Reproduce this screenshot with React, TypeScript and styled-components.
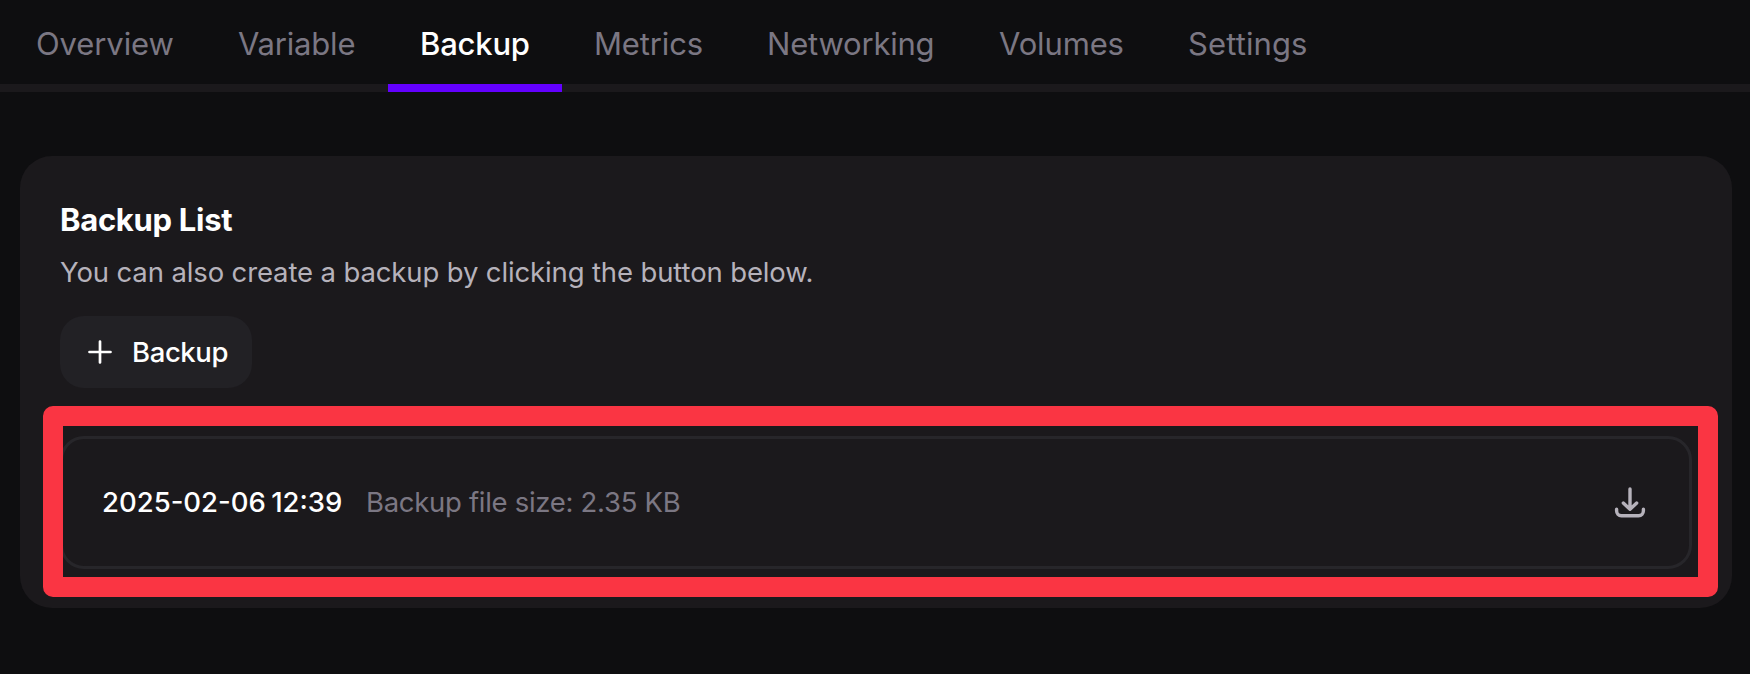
import React from "react";
import styled, { createGlobalStyle } from "styled-components";

const GlobalStyle = createGlobalStyle`
  *, *::before, *::after { box-sizing: border-box; }
  body {
    margin: 0;
    background: #0e0e10;
    font-family: Inter, "Liberation Sans", sans-serif;
    -webkit-font-smoothing: antialiased;
  }
  button { font: inherit; border: 0; padding: 0; background: none; }
`;

const Page = styled.div`
  min-height: 674px;
  overflow: hidden;
`;

const TabBar = styled.nav`
  display: flex;
  height: 92px;
  padding-left: 4px;
  box-shadow: inset 0 -8px 0 #1b191c;
`;

const Tab = styled.button<{ $active?: boolean; $width: number; $tracking: number }>`
  flex: none;
  width: ${(p) => p.$width}px;
  padding: 0 0 0 32px;
  border-bottom: 8px solid ${(p) => (p.$active ? "#6300ff" : "transparent")};
  color: ${(p) => (p.$active ? "#ffffff" : "#7b7783")};
  font-size: 31px;
  font-weight: ${(p) => (p.$active ? 500 : 400)};
  line-height: 88px;
  height: 92px;
  letter-spacing: ${(p) => p.$tracking}px;
  text-align: left;
  white-space: nowrap;
`;

const Card = styled.section`
  width: 1712px;
  height: 452px;
  margin: 64px 0 0 20px;
  padding: 40px;
  border-radius: 32px;
  background: #1b191c;
`;

const Title = styled.h2`
  margin: 0;
  color: #ffffff;
  font-size: 31px;
  font-weight: 700;
  line-height: 48px;
  letter-spacing: -0.3px;
`;

const Description = styled.p`
  margin: 8px 0 0;
  color: #b6b2bb;
  font-size: 27.5px;
  line-height: 40px;
  letter-spacing: -0.13px;
`;

const BackupButton = styled.button`
  display: flex;
  align-items: center;
  gap: 16px;
  width: 192px;
  height: 72px;
  margin-top: 24px;
  padding-left: 24px;
  border-radius: 24px;
  background: #222125;
  color: #ffffff;
  font-size: 27.5px;
  font-weight: 500;
  letter-spacing: -0.4px;
`;

const ListItem = styled.div`
  position: relative;
  display: flex;
  align-items: center;
  height: 133px;
  margin-top: 48px;
  padding: 0 43px 2px 39px;
  border: 3px solid #27262a;
  border-radius: 24px;
`;

const Timestamp = styled.span`
  width: 264px;
  color: #ffffff;
  font-size: 27.5px;
  font-weight: 500;
  letter-spacing: 0;
  word-spacing: -2px;
  white-space: nowrap;
`;

const FileSize = styled.span`
  flex: 1;
  color: #7b7783;
  font-size: 27.5px;
  letter-spacing: -0.3px;
`;

const DownloadButton = styled.button`
  display: flex;
  color: #b6b2bb;
`;

const Highlight = styled.div`
  position: absolute;
  top: -33.3px;
  left: -20px;
  width: 1675px;
  height: 191.3px;
  border: 20px solid #fa3543;
  border-radius: 10px;
  pointer-events: none;
`;

const tabs = [
  { label: "Overview", width: 202, tracking: -0.1 },
  { label: "Variable", width: 182, tracking: -0.2 },
  { label: "Backup", width: 174, tracking: -0.2 },
  { label: "Metrics", width: 173, tracking: -0.15 },
  { label: "Networking", width: 232, tracking: -0.2 },
  { label: "Volumes", width: 189, tracking: -0.15 },
  { label: "Settings", width: 183, tracking: 0.1 },
];

const PlusIcon = () => (
  <svg width="32" height="32" viewBox="0 0 32 32" fill="none" stroke="currentColor" strokeWidth="2.7" strokeLinecap="round">
    <path d="M16 5.5v21M5.5 16h21" />
  </svg>
);

const DownloadIcon = () => (
  <svg width="32" height="32" viewBox="0 0 32 32" fill="none" stroke="currentColor" strokeWidth="3.4" strokeLinecap="round" strokeLinejoin="round">
    <path d="M16 3v20M9.3 17.1l6.7 6.2 6.7-6.2" />
    <path d="M2.6 23.2v1.6c0 2.7 2 4.9 4.8 4.9h17.2c2.8 0 4.8-2.2 4.8-4.9v-1.6" />
  </svg>
);

export default function App() {
  return (
    <Page>
      <GlobalStyle />
      <TabBar>
        {tabs.map((tab) => (
          <Tab key={tab.label} $width={tab.width} $tracking={tab.tracking} $active={tab.label === "Backup"}>
            {tab.label}
          </Tab>
        ))}
      </TabBar>
      <Card>
        <Title>Backup List</Title>
        <Description>You can also create a backup by clicking the button below.</Description>
        <BackupButton>
          <PlusIcon />
          Backup
        </BackupButton>
        <ListItem>
          <Timestamp>2025-02-06 12:39</Timestamp>
          <FileSize>Backup file size: 2.35 KB</FileSize>
          <DownloadButton aria-label="Download backup">
            <DownloadIcon />
          </DownloadButton>
          <Highlight />
        </ListItem>
      </Card>
    </Page>
  );
}
